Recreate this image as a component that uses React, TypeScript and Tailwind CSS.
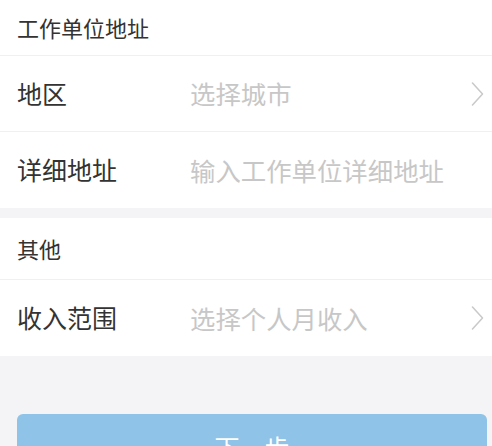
const font = { fontFamily: '"Noto Sans CJK SC", "Noto Sans", sans-serif' };

function Chevron() {
  return (
    <svg width="13" height="24" viewBox="0 0 13 24" fill="none" stroke="#c9c9c9" strokeWidth="1.5" strokeLinecap="round" strokeLinejoin="round">
      <path d="M1.5 1 L11.5 12 L1.5 23" />
    </svg>
  );
}

function Row({ label, placeholder, arrow, last }: { label: string; placeholder: string; arrow?: boolean; last?: boolean }) {
  return (
    <div className={`flex h-[76px] items-center pl-[17px] pr-[8px] ${last ? "" : "border-b border-[#f0f0f0]"}`}>
      <div className="w-[173px] text-[25px] text-[#333333]">{label}</div>
      <div className="flex-1 text-[25.4px] text-[#c7c7c7]">{placeholder}</div>
      {arrow && <Chevron />}
    </div>
  );
}

export default function App() {
  return (
    <div className="min-h-[446px] w-[492px] overflow-hidden bg-[#f4f4f6]" style={font}>
      <div className="bg-white">
        <div className="flex h-[56px] items-center border-b border-[#f0f0f0] pl-[17px] text-[22px] text-[#333333]">
          工作单位地址
        </div>
        <Row label="地区" placeholder="选择城市" arrow />
        <Row label="详细地址" placeholder="输入工作单位详细地址" last />
      </div>
      <div className="mt-[10px] bg-white">
        <div className="flex h-[62px] items-center border-b border-[#f0f0f0] pl-[17px] text-[22px] text-[#333333]">
          其他
        </div>
        <Row label="收入范围" placeholder="选择个人月收入" arrow last />
      </div>
      <div className="pl-[17px] pr-[5px] pt-[58px]">
        <button className="flex h-[68px] w-full items-center justify-center rounded-[6px] bg-[#8fc3e8] text-[25px] text-white">
          下一步
        </button>
      </div>
    </div>
  );
}
